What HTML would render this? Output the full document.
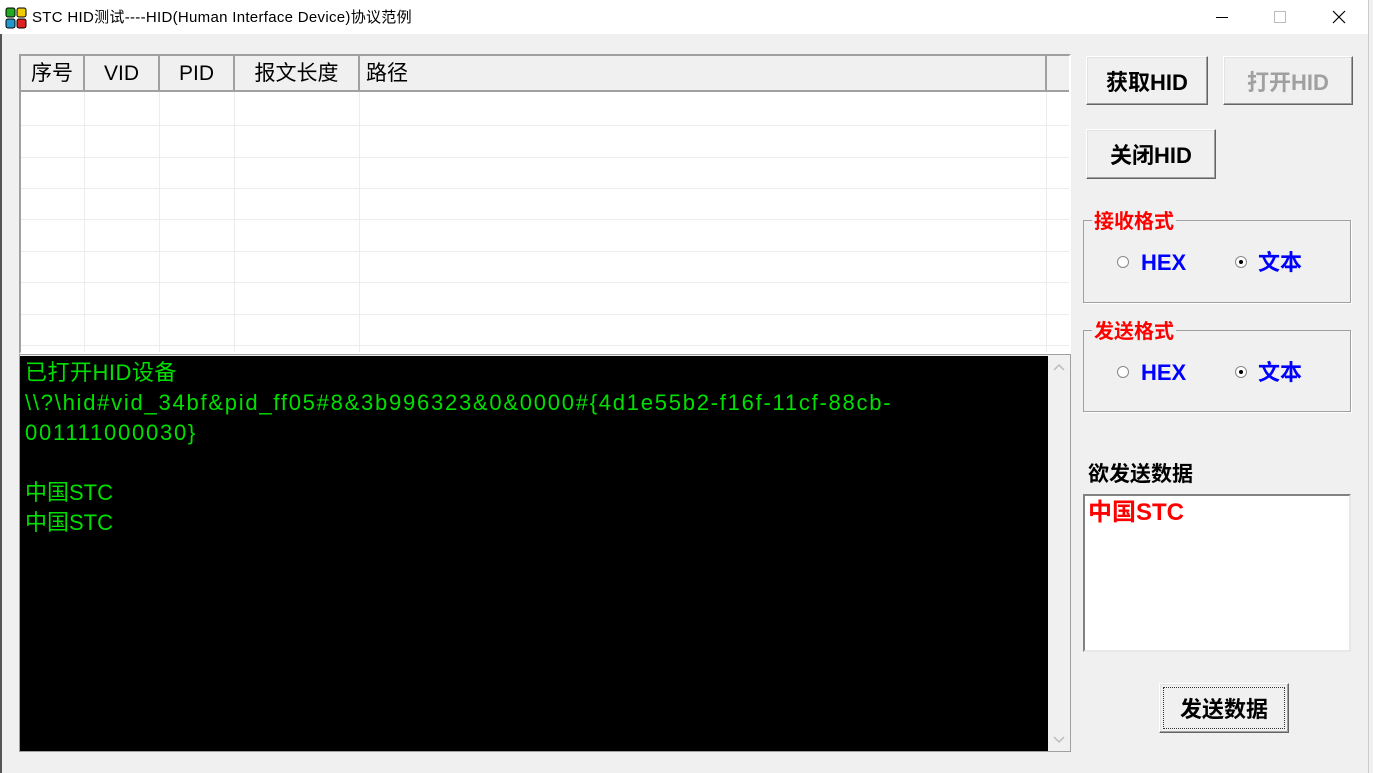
<!DOCTYPE html>
<html><head><meta charset="utf-8"><style>
*{margin:0;padding:0;box-sizing:border-box}
body{width:1373px;height:773px;background:#f0f0f0;position:relative;overflow:hidden;font-family:"Liberation Sans","Noto Sans CJK SC",sans-serif}
.abs{position:absolute}
.title{left:0;top:0;width:1373px;height:34px;background:#fff}
.btn{position:absolute;background:#f0f0f0;border:1px solid;border-color:#fff #646464 #646464 #fff;box-shadow:inset -1px -1px 0 #a0a0a0,inset 1px 1px 0 #e3e3e3;font-weight:bold;font-size:22px;display:flex;align-items:center;justify-content:center;color:#000;font-family:"Liberation Sans","Noto Sans CJK SC",sans-serif}
.grp{position:absolute;border:1px solid #a0a0a0;box-shadow:1px 1px 0 #fff}
.glab{position:absolute;top:-14px;left:8px;background:#f0f0f0;color:#f00;font-weight:bold;font-size:20px;padding:0 2px;font-family:"Noto Sans CJK SC",sans-serif;line-height:26px}
.radio{position:absolute;width:12px;height:12px;border-radius:50%;background:#fff;border:1px solid #888}
.radio.on::after{content:"";position:absolute;left:3px;top:3px;width:4px;height:4px;border-radius:50%;background:#000}
.rl{position:absolute;color:#0000ff;font-weight:bold;font-size:22px;font-family:"Liberation Sans","Noto Sans CJK SC",sans-serif;line-height:26px}
.hd{position:absolute;top:0;height:36px;border-right:2px solid #a0a0a0;font-size:21px;line-height:36px;text-align:center;font-family:"Liberation Sans","Noto Sans CJK SC",sans-serif;color:#000}
.green{position:absolute;left:25px;color:#00e000;font-size:22px;letter-spacing:1.75px;font-family:"Liberation Sans","Noto Sans CJK SC",sans-serif;line-height:30px;white-space:pre}
</style></head><body>
<div class="abs title"></div>
<div class="abs" style="left:0;top:34px;width:2px;height:739px;background:#555"></div>
<div class="abs" style="left:1368px;top:0;width:5px;height:773px;background:#f0f0f0;border-left:1px solid #ccc"></div>
<svg class="abs" style="left:5px;top:7px" width="22" height="22" viewBox="0 0 22 22">
<rect x="1" y="1" width="9" height="9" rx="2" fill="#2a2" stroke="#000"/><rect x="12" y="1" width="9" height="9" rx="2" fill="#ec0" stroke="#000"/>
<rect x="1" y="12" width="9" height="9" rx="2" fill="#29c" stroke="#000"/><rect x="12" y="12" width="9" height="9" rx="2" fill="#d22" stroke="#000"/></svg>
<div class="abs" style="left:32px;top:8px;font-size:15px;letter-spacing:0.3px;font-family:'Liberation Sans','Noto Sans CJK SC',sans-serif;line-height:20px">STC HID测试----HID(Human Interface Device)协议范例</div>
<div class="abs" style="left:1216px;top:17px;width:12px;height:1px;background:#000"></div>
<div class="abs" style="left:1274px;top:11px;width:12px;height:12px;border:1px solid #bbb"></div>
<svg class="abs" style="left:1332px;top:10px" width="14" height="14"><path d="M1 1L13 13M13 1L1 13" stroke="#000" stroke-width="1.2"/></svg>

<div class="abs" style="left:19px;top:54px;width:1052px;height:300px;background:#fff;border:2px solid;border-color:#a0a0a0 #fff #fff #a0a0a0;overflow:hidden">
 <div class="abs" style="left:0;top:0;width:1050px;height:36px;background:#f0f0f0;border-bottom:2px solid #a0a0a0"></div>
 <div class="hd" style="left:0;width:64px">序号</div>
 <div class="hd" style="left:64px;width:75px">VID</div>
 <div class="hd" style="left:139px;width:75px">PID</div>
 <div class="hd" style="left:214px;width:125px">报文长度</div>
 <div class="hd" style="left:339px;width:687px;text-align:left;padding-left:6px">路径</div>
 <svg class="abs" style="left:0;top:36px" width="1050" height="264">
  <g stroke="#ececec" stroke-width="1">
   <path d="M0 33.5H1050M0 65.5H1050M0 96.5H1050M0 127.5H1050M0 159.5H1050M0 190.5H1050M0 222.5H1050M0 253.5H1050"/>
   <path d="M63.5 0V264M138.5 0V264M213.5 0V264M338.5 0V264M1025.5 0V264"/>
  </g></svg>
</div>

<div class="abs" style="left:19px;top:354px;width:1052px;height:398px;border:1px solid #a0a0a0;background:#f0f0f0"></div>
<div class="abs" style="left:20px;top:356px;width:1028px;height:395px;background:#000"></div>
<svg class="abs" style="left:1053px;top:362px" width="12" height="10"><path d="M1 8L6 3L11 8" fill="none" stroke="#bbb" stroke-width="1.5"/></svg>
<svg class="abs" style="left:1053px;top:735px" width="12" height="10"><path d="M1 2L6 7L11 2" fill="none" stroke="#bbb" stroke-width="1.5"/></svg>
<div class="green" style="top:358px;letter-spacing:0.5px">已打开HID设备</div>
<div class="green" style="top:388px">\\?\hid#vid_34bf&amp;pid_ff05#8&amp;3b996323&amp;0&amp;0000#{4d1e55b2-f16f-11cf-88cb-</div>
<div class="green" style="top:418px">001111000030}</div>
<div class="green" style="top:478px;letter-spacing:0">中国STC</div>
<div class="green" style="top:508px;letter-spacing:0">中国STC</div>

<div class="btn" style="left:1086px;top:56px;width:122px;height:49px">获取HID</div>
<div class="btn" style="left:1223px;top:56px;width:130px;height:49px;color:#a0a0a0">打开HID</div>
<div class="btn" style="left:1086px;top:129px;width:130px;height:50px">关闭HID</div>

<div class="grp" style="left:1083px;top:220px;width:268px;height:83px">
 <div class="glab">接收格式</div>
 <div class="radio" style="left:33px;top:35px"></div><div class="rl" style="left:57px;top:29px">HEX</div>
 <div class="radio on" style="left:151px;top:35px"></div><div class="rl" style="left:174px;top:29px">文本</div>
</div>
<div class="grp" style="left:1083px;top:330px;width:268px;height:82px">
 <div class="glab">发送格式</div>
 <div class="radio" style="left:33px;top:35px"></div><div class="rl" style="left:57px;top:29px">HEX</div>
 <div class="radio on" style="left:151px;top:35px"></div><div class="rl" style="left:174px;top:29px">文本</div>
</div>
<div class="abs" style="left:1088px;top:459px;font-weight:bold;font-size:21px;font-family:'Noto Sans CJK SC',sans-serif;line-height:28px">欲发送数据</div>
<div class="abs" style="left:1083px;top:494px;width:268px;height:158px;background:#fff;border:2px solid;border-color:#828282 #e8e8e8 #e8e8e8 #828282"></div>
<div class="abs" style="left:1088px;top:497px;color:#f00;font-weight:bold;font-size:24px;font-family:'Liberation Sans','Noto Sans CJK SC',sans-serif;line-height:32px">中国STC</div>
<div class="btn" style="left:1159px;top:683px;width:130px;height:50px;outline:1px dotted #333;outline-offset:-5px">发送数据</div>
</body></html>
